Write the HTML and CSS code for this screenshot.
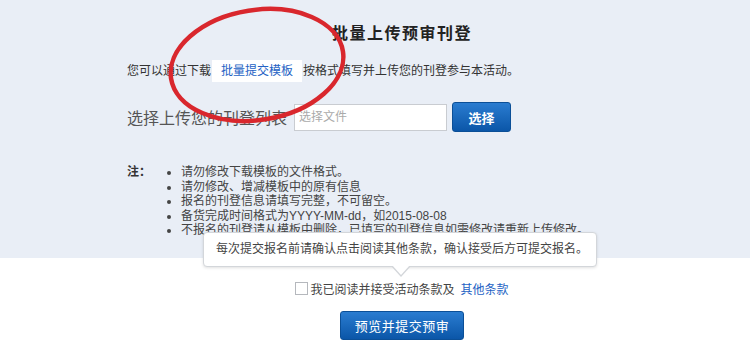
FILE: index.html
```html
<!DOCTYPE html>
<html lang="zh-CN">
<head>
<meta charset="utf-8">
<title>批量上传预审刊登</title>
<link rel="stylesheet" href="styles.css">
</head>
<body>
<div class="page">
  <section class="panel">
    <div class="wrap">
      <h1 class="title">批量上传预审刊登</h1>
      <p class="intro">您可以通过下载<a class="tpl-link" href="#">批量提交模板</a>按格式填写并上传您的刊登参与本活动。</p>
      <div class="upload-row">
        <span class="upload-label">选择上传您的刊登列表</span>
        <input class="file-input" type="text" placeholder="选择文件">
        <button class="btn-choose" type="button">选择</button>
      </div>
      <div class="notes">
        <span class="notes-label">注：</span>
        <ul class="notes-list">
          <li>请勿修改下载模板的文件格式。</li>
          <li>请勿修改、增减模板中的原有信息</li>
          <li>报名的刊登信息请填写完整，不可留空。</li>
          <li>备货完成时间格式为YYYY-MM-dd，如2015-08-08</li>
          <li>不报名的刊登请从模板中删除，已填写的刊登信息如需修改请重新上传修改。</li>
        </ul>
      </div>
    </div>
  </section>
  <section class="footer">
    <div class="wrap center">
      <label class="agree"><span class="checkbox"></span>我已阅读并接受活动条款及<a class="other-link" href="#">其他条款</a></label>
      <button class="btn-submit" type="button">预览并提交预审</button>
    </div>
  </section>
  <div class="tooltip">每次提交报名前请确认点击阅读其他条款，确认接受后方可提交报名。<span class="arrow"></span></div>
  <svg class="circle" width="210" height="130" viewBox="0 0 210 130">
    <ellipse cx="97" cy="65" rx="87" ry="55" transform="rotate(-9 97 65)" fill="none" stroke="#d9272d" stroke-width="4.5"/>
  </svg>
</div>
</body>
</html>
```

FILE: styles.css
```css
html, body {
  margin: 0;
  padding: 0;
  background: #fff;
}
body {
  font-family: "Liberation Sans", "Noto Sans CJK SC", sans-serif;
  color: #333;
  font-size: 12px;
}
.page {
  position: relative;
  width: 750px;
  height: 347px;
  overflow: hidden;
}
.panel {
  background: #e9eef6;
  height: 258px;
  padding-left: 127px;
  box-sizing: border-box;
}
.footer {
  padding-left: 127px;
}
.wrap {
  width: 550px;
}
.center {
  display: flex;
  flex-direction: column;
  align-items: center;
}
.title {
  margin: 0;
  padding-top: 24px;
  font-size: 16px;
  line-height: 20px;
  font-weight: bold;
  color: #222;
  text-align: center;
  letter-spacing: 1.5px;
}
.intro {
  margin: 16px 0 0;
  line-height: 22px;
  height: 22px;
  color: #333;
  white-space: nowrap;
}
.tpl-link {
  display: inline-block;
  background: #fff;
  color: #2462c4;
  text-decoration: none;
  padding: 0 9px;
  margin: 0 1px;
  height: 22px;
}
.upload-row {
  display: flex;
  align-items: center;
  margin-top: 20px;
  height: 30px;
}
.upload-label {
  font-size: 16px;
  color: #555;
  width: 167px;
}
.file-input {
  box-sizing: border-box;
  width: 153px;
  height: 27px;
  border: 1px solid #c9ccd1;
  background: #fff;
  padding: 0 4px;
  font: 12px "Liberation Sans", "Noto Sans CJK SC", sans-serif;
  outline: none;
}
.file-input::placeholder {
  color: #aaa;
}
.btn-choose {
  margin-left: 5px;
  width: 59px;
  height: 30px;
  border: 1px solid #0b4f97;
  border-radius: 3px;
  background: linear-gradient(#2a7cd0, #0b56a8);
  color: #fff;
  font: bold 13px "Liberation Sans", "Noto Sans CJK SC", sans-serif;
  padding: 0;
}
.notes {
  display: flex;
  margin-top: 33px;
  line-height: 14.6px;
}
.notes-label {
  width: 43px;
  font-weight: bold;
  color: #333;
}
.notes-list {
  margin: 0;
  padding-left: 11px;
  list-style: disc;
  color: #444;
  white-space: nowrap;
}
.agree {
  display: flex;
  align-items: center;
  margin-top: 23px;
  height: 14px;
  color: #444;
}
.checkbox {
  box-sizing: border-box;
  width: 13px;
  height: 13px;
  border: 1px solid #b5b8bd;
  background: #fff;
  margin-right: 2px;
}
.other-link {
  color: #2462c4;
  text-decoration: none;
  margin-left: 6px;
}
.btn-submit {
  margin-top: 16px;
  width: 124px;
  height: 29px;
  border: 1px solid #0b4f97;
  border-radius: 3px;
  background: linear-gradient(#2a7cd0, #0b56a8);
  color: #fff;
  font: 13px "Liberation Sans", "Noto Sans CJK SC", sans-serif;
  letter-spacing: 0.5px;
  padding: 0;
}
.tooltip {
  position: absolute;
  left: 203px;
  top: 232px;
  width: 394px;
  height: 35px;
  box-sizing: border-box;
  background: #fff;
  border: 1px solid #d3d6da;
  border-radius: 4px;
  box-shadow: 0 1px 3px rgba(0,0,0,0.12);
  color: #444;
  line-height: 33px;
  padding-left: 12px;
  white-space: nowrap;
}
.arrow {
  position: absolute;
  left: 187px;
  top: 33px;
  width: 0;
  height: 0;
  border-left: 10px solid transparent;
  border-right: 10px solid transparent;
  border-top: 11px solid #d3d6da;
}
.arrow::after {
  content: "";
  position: absolute;
  left: -9px;
  top: -12px;
  border-left: 9px solid transparent;
  border-right: 9px solid transparent;
  border-top: 10px solid #fff;
}
.circle {
  position: absolute;
  left: 160px;
  top: 0;
}
```
